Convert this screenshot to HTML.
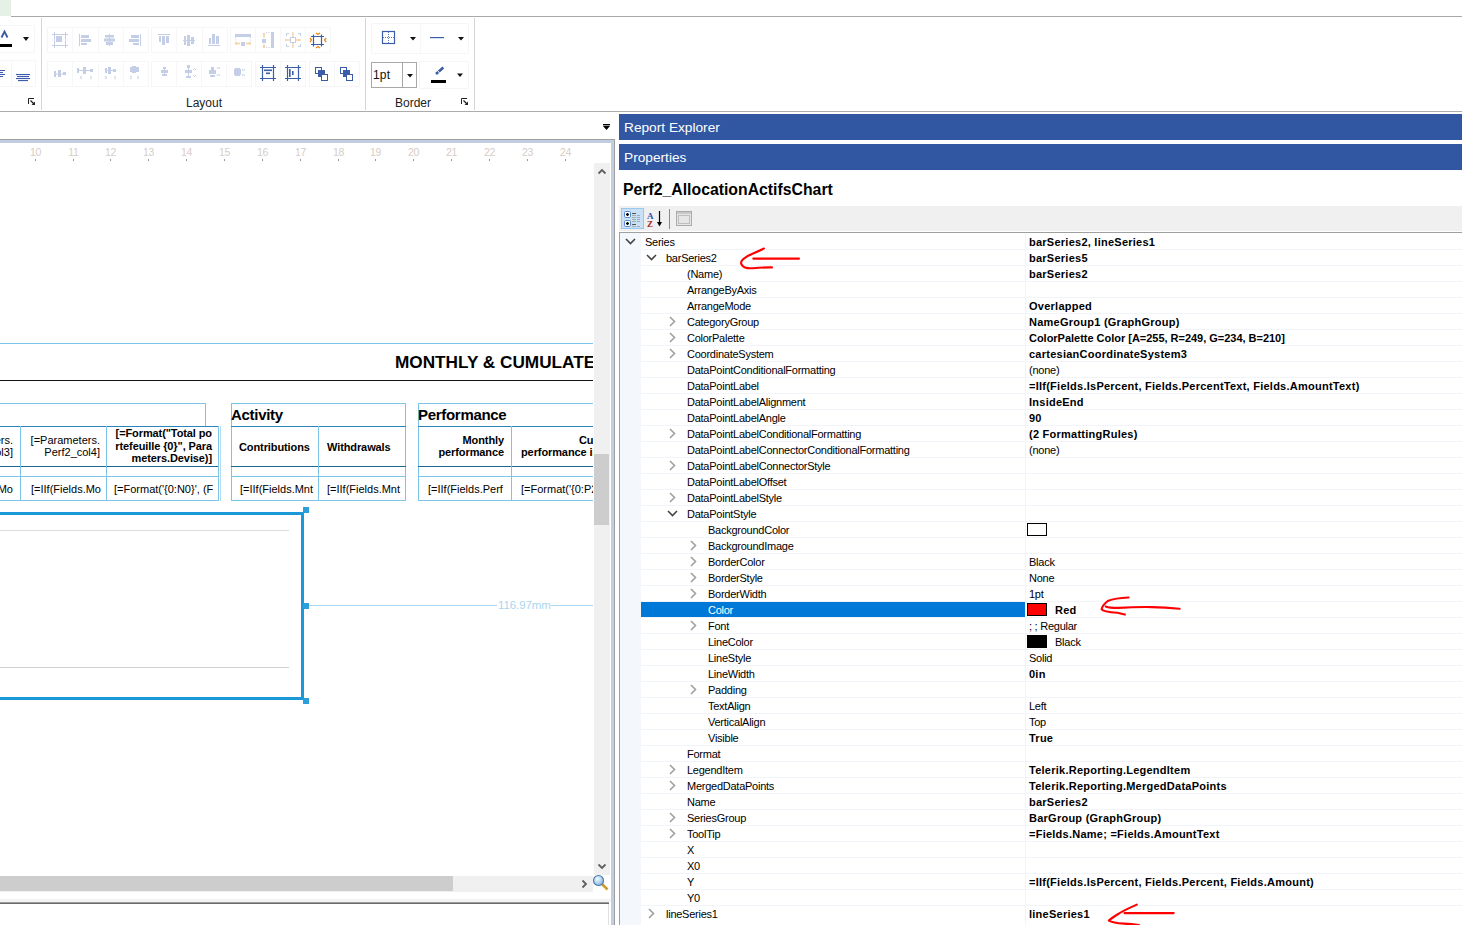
<!DOCTYPE html><html><head><meta charset="utf-8"><style>
*{margin:0;padding:0;box-sizing:border-box}
html,body{width:1462px;height:925px;overflow:hidden;background:#fff;font-family:"Liberation Sans",sans-serif;color:#000}
div,span,svg{position:absolute}
.t{white-space:nowrap;line-height:1}
</style></head><body><div style="left:0px;top:0px;width:11px;height:16px;background:#e6f1e6"></div>
<div style="left:11px;top:16px;width:1451px;height:1px;background:#a8a8a8"></div>
<div style="left:0px;top:111px;width:1462px;height:1px;background:#acacac"></div>
<div style="left:41px;top:18px;width:1px;height:92px;background:#d5d5d5"></div>
<div style="left:365px;top:18px;width:1px;height:92px;background:#d5d5d5"></div>
<div style="left:474px;top:18px;width:1px;height:92px;background:#d5d5d5"></div>
<svg style="left:0;top:0" width="480" height="112" viewBox="0 0 480 112"><rect x="-0.5" y="25.5" width="35" height="27" fill="none" stroke="#f6f6f6" stroke-width="1"/><rect x="-0.5" y="60.5" width="12" height="26" fill="none" stroke="#f6f6f6" stroke-width="1"/><rect x="11.5" y="60.5" width="24" height="26" fill="none" stroke="#f6f6f6" stroke-width="1"/><rect x="47.5" y="27.5" width="101" height="25" fill="none" stroke="#f6f6f6" stroke-width="1"/><rect x="72" y="28" width="1" height="24" fill="#f7f7f7"/><rect x="98" y="28" width="1" height="24" fill="#f7f7f7"/><rect x="123" y="28" width="1" height="24" fill="#f7f7f7"/><rect x="151.5" y="27.5" width="76" height="25" fill="none" stroke="#f6f6f6" stroke-width="1"/><rect x="176" y="28" width="1" height="24" fill="#f7f7f7"/><rect x="202" y="28" width="1" height="24" fill="#f7f7f7"/><rect x="230.5" y="27.5" width="100" height="25" fill="none" stroke="#f6f6f6" stroke-width="1"/><rect x="255" y="28" width="1" height="24" fill="#f7f7f7"/><rect x="280" y="28" width="1" height="24" fill="#f7f7f7"/><rect x="305" y="28" width="1" height="24" fill="#f7f7f7"/><rect x="47.5" y="61.5" width="101" height="25" fill="none" stroke="#f6f6f6" stroke-width="1"/><rect x="72" y="62" width="1" height="24" fill="#f7f7f7"/><rect x="98" y="62" width="1" height="24" fill="#f7f7f7"/><rect x="123" y="62" width="1" height="24" fill="#f7f7f7"/><rect x="151.5" y="61.5" width="100" height="25" fill="none" stroke="#f6f6f6" stroke-width="1"/><rect x="176" y="62" width="1" height="24" fill="#f7f7f7"/><rect x="201" y="62" width="1" height="24" fill="#f7f7f7"/><rect x="226" y="62" width="1" height="24" fill="#f7f7f7"/><rect x="255.5" y="61.5" width="50" height="25" fill="none" stroke="#f6f6f6" stroke-width="1"/><rect x="280" y="62" width="1" height="24" fill="#f7f7f7"/><rect x="309.5" y="61.5" width="50" height="25" fill="none" stroke="#f6f6f6" stroke-width="1"/><rect x="334" y="62" width="1" height="24" fill="#f7f7f7"/><rect x="371.5" y="23.5" width="97" height="30" fill="none" stroke="#f6f6f6" stroke-width="1"/><rect x="420" y="24" width="1" height="29" fill="#f7f7f7"/><rect x="419.5" y="61.5" width="49" height="27" fill="none" stroke="#f6f6f6" stroke-width="1"/><path d="M1.5 37.5 L4.5 31.5 L7.5 37.5" fill="none" stroke="#3b5ca8" stroke-width="1.9"/><rect x="0" y="44" width="12" height="3" fill="#000"/><path d="M23 37 L29 37 L26 41 Z" fill="#111"/><rect x="0" y="70" width="5" height="1" fill="#3b5ca8"/><rect x="0" y="72" width="3" height="1" fill="#3b5ca8"/><rect x="0" y="74" width="5" height="1" fill="#3b5ca8"/><rect x="0" y="76" width="3" height="1" fill="#3b5ca8"/><rect x="16" y="74" width="14" height="1.1" fill="#3b5ca8"/><rect x="17" y="76" width="12" height="1.1" fill="#3b5ca8"/><rect x="16" y="78" width="14" height="1.1" fill="#3b5ca8"/><rect x="18" y="80" width="10" height="1.1" fill="#3b5ca8"/><path d="M28.5 104 L28.5 98.5 L34 98.5" fill="none" stroke="#222" stroke-width="1"/><path d="M30.5 100.5 L34.5 104.5" stroke="#222" stroke-width="1.3"/><path d="M31.5 105 L35 105 L35 101.5 Z" fill="#222"/><path d="M461.5 104 L461.5 98.5 L467 98.5" fill="none" stroke="#222" stroke-width="1"/><path d="M463.5 100.5 L467.5 104.5" stroke="#222" stroke-width="1.3"/><path d="M464.5 105 L468 105 L468 101.5 Z" fill="#222"/><path d="M52 34.5 H68 M52 45.5 H68 M54.5 32 V48 M65.5 32 V48" stroke="#c4cee6" stroke-width="1"/><rect x="56" y="36" width="6" height="6" fill="#c4cee6"/><rect x="79" y="34" width="1" height="12" fill="#c4cee6"/><rect x="81" y="35" width="8" height="3" fill="#c4cee6"/><rect x="81" y="39" width="10" height="3" fill="#c4cee6"/><rect x="81" y="43" width="6" height="2" fill="#c4cee6"/><rect x="109" y="34" width="1" height="12" fill="#c4cee6"/><rect x="105" y="35" width="9" height="2.5" fill="#c4cee6"/><rect x="104" y="38.5" width="11" height="3" fill="#c4cee6"/><rect x="106" y="42" width="7" height="3" fill="#c4cee6"/><rect x="140" y="34" width="1" height="12" fill="#c4cee6"/><rect x="131" y="35" width="8" height="3" fill="#c4cee6"/><rect x="129" y="39" width="10" height="3" fill="#c4cee6"/><rect x="133" y="43" width="6" height="2" fill="#c4cee6"/><rect x="158" y="34" width="12" height="1" fill="#c4cee6"/><rect x="159" y="36" width="2" height="6" fill="#c4cee6"/><rect x="162" y="36" width="3" height="9" fill="#c4cee6"/><rect x="166" y="36" width="3" height="7" fill="#c4cee6"/><rect x="183" y="40" width="12" height="1" fill="#c4cee6"/><rect x="184" y="36" width="2" height="9" fill="#c4cee6"/><rect x="187" y="35" width="3" height="11" fill="#c4cee6"/><rect x="191" y="37" width="3" height="7" fill="#c4cee6"/><rect x="208" y="45" width="12" height="1" fill="#c4cee6"/><rect x="209" y="38" width="2" height="6" fill="#c4cee6"/><rect x="212" y="34" width="3" height="10" fill="#c4cee6"/><rect x="216" y="36" width="3" height="8" fill="#c4cee6"/><rect x="235" y="34" width="16" height="3" fill="#c4cee6"/><path d="M235.5 37 V43 M250.5 37 V43" stroke="#c4cee6" stroke-dasharray="1 1.5"/><rect x="241" y="42" width="4" height="4" fill="#c4cee6"/><path d="M235 43.5 H240 M246 43.5 H251" stroke="#f5d2a4" stroke-width="1.3"/><circle cx="236.5" cy="43.5" r="1.2" fill="#f5d2a4"/><circle cx="249.5" cy="43.5" r="1.2" fill="#f5d2a4"/><rect x="271" y="32" width="3" height="16" fill="#c4cee6"/><path d="M266 32.5 H270 M266 47.5 H270" stroke="#c4cee6" stroke-dasharray="1 1.5"/><rect x="262" y="39" width="4" height="4" fill="#c4cee6"/><path d="M264 33 V38 M264 44 V48" stroke="#f5d2a4" stroke-width="1.3"/><circle cx="264" cy="34" r="1.2" fill="#f5d2a4"/><circle cx="264" cy="46.5" r="1.2" fill="#f5d2a4"/><path d="M286.5 36 V33.5 H289 M298 33.5 H300.5 V36 M300.5 44 V46.5 H298 M289 46.5 H286.5 V44" fill="none" stroke="#c4cee6"/><rect x="290.5" y="37.5" width="5" height="5" fill="none" stroke="#c4cee6"/><path d="M293 32 V37 M293 43 V48 M285 40 H290 M296 40 H301" stroke="#f5d2a4" stroke-width="1.3"/><path d="M311 36.5 H324 M311 44.5 H324 M313.5 34.5 V46.5 M321.5 34.5 V46.5" stroke="#3b5ca8" stroke-width="1.2"/><path d="M316 33 L318 34.5 L320 33 M316 48 L318 46.5 L320 48 M310 38 L311.5 40 L310 42 M326 38 L324.5 40 L326 42" fill="none" stroke="#ee8a12" stroke-width="1.3"/><rect x="54" y="71" width="2" height="6" fill="#c4cee6"/><rect x="55" y="73.5" width="10" height="1" fill="#c4cee6"/><rect x="58" y="70" width="3" height="7" fill="#c4cee6"/><rect x="63" y="72" width="3" height="3" fill="#c4cee6"/><rect x="77" y="68" width="2" height="5" fill="#c4cee6"/><rect x="78" y="70" width="15" height="1" fill="#c4cee6"/><rect x="83" y="67" width="3" height="7" fill="#c4cee6"/><rect x="90" y="69" width="3" height="3" fill="#c4cee6"/><path d="M82 76 L80 77.5 L82 79 M90 76 L92 77.5 L90 79" fill="none" stroke="#c4cee6"/><rect x="105" y="68" width="2" height="5" fill="#c4cee6"/><rect x="106" y="70" width="10" height="1" fill="#c4cee6"/><rect x="108" y="67" width="3" height="7" fill="#c4cee6"/><rect x="113" y="69" width="3" height="3" fill="#c4cee6"/><path d="M105 76 L107 77.5 L105 79 M116 76 L114 77.5 L116 79" fill="none" stroke="#c4cee6"/><rect x="130" y="67" width="9" height="5" fill="#c4cee6"/><rect x="132" y="66" width="4" height="7" fill="#c4cee6"/><path d="M130 76 L132 77.5 L130 79 M139 76 L137 77.5 L139 79" fill="none" stroke="#c4cee6"/><rect x="163" y="67" width="3" height="2" fill="#c4cee6"/><rect x="161" y="70" width="7" height="3" fill="#c4cee6"/><rect x="162" y="74" width="5" height="2" fill="#c4cee6"/><rect x="164" y="68" width="1" height="7" fill="#c4cee6"/><rect x="187" y="65" width="3" height="3" fill="#c4cee6"/><rect x="185" y="70" width="7" height="3" fill="#c4cee6"/><rect x="186" y="76" width="5" height="2" fill="#c4cee6"/><rect x="188" y="67" width="1" height="10" fill="#c4cee6"/><path d="M193 70 L194.5 68.5 L196 70 M193 75 L194.5 76.5 L196 75" fill="none" stroke="#c4cee6"/><rect x="211" y="67" width="3" height="3" fill="#c4cee6"/><rect x="209" y="70" width="7" height="4" fill="#c4cee6"/><rect x="210" y="75" width="5" height="2" fill="#c4cee6"/><path d="M217 67 L218.5 69 L220 67 M217 76 L218.5 74 L220 76" fill="none" stroke="#c4cee6"/><rect x="234" y="69" width="7" height="6" fill="#c4cee6"/><rect x="235" y="68" width="5" height="8" fill="#c4cee6"/><path d="M242 69 L243.5 71 L245 69 M242 76 L243.5 74 L245 76" fill="none" stroke="#c4cee6"/><path d="M260 67.5 H276 M260 78.5 H276 M262.5 65 V81 M273.5 65 V81" stroke="#3b5ca8" stroke-width="1.2"/><rect x="264" y="69.5" width="8" height="1.6" fill="#3b5ca8"/><rect x="266" y="72.5" width="4" height="1.6" fill="#3b5ca8"/><path d="M285 67.5 H301 M285 78.5 H301 M287.5 65 V81 M298.5 65 V81" stroke="#3b5ca8" stroke-width="1.2"/><rect x="289" y="69" width="1.6" height="8" fill="#3b5ca8"/><rect x="292" y="71" width="1.6" height="4" fill="#3b5ca8"/><rect x="315.5" y="67.5" width="6" height="6" fill="#fff" stroke="#3b5ca8"/><rect x="318" y="70" width="7" height="7" fill="#3b5ca8"/><rect x="321.5" y="74.5" width="6" height="6" fill="#fff" stroke="#3b5ca8"/><rect x="340.5" y="67.5" width="6" height="6" fill="#fff" stroke="#3b5ca8"/><rect x="343" y="70" width="7" height="7" fill="#3b5ca8"/><rect x="346.5" y="74.5" width="6" height="6" fill="#fff" stroke="#3b5ca8"/><rect x="382.5" y="31.5" width="12" height="12" fill="none" stroke="#3b5ca8" stroke-width="1.2"/><path d="M388.5 32 V43 M383 37.5 H394" stroke="#3b5ca8" stroke-width="0.8" stroke-dasharray="1 1"/><path d="M410 37 L416 37 L413 40.5 Z" fill="#111"/><rect x="430" y="37" width="14" height="1.2" fill="#3b5ca8"/><path d="M458 37 L464 37 L461 40.5 Z" fill="#111"/><rect x="371.5" y="62.5" width="45" height="25" fill="#fff" stroke="#a8a8a8"/><rect x="402" y="63" width="1" height="24" fill="#a8a8a8"/><path d="M407 74 L413 74 L410 77.5 Z" fill="#111"/><path d="M436 74 L445 66" stroke="#3b5ca8" stroke-width="2.6" stroke-dasharray="3 0.8 6"/><rect x="431" y="80" width="15" height="3" fill="#000"/><path d="M457 73.5 L463 73.5 L460 77 Z" fill="#111"/></svg>
<span class="t" style="left:373px;top:69px;font-size:12px;color:#111;letter-spacing:0.2px">1pt</span>
<span class="t" style="left:186px;top:97px;font-size:12px;color:#222">Layout</span>
<span class="t" style="left:395px;top:97px;font-size:12px;color:#222">Border</span>
<div style="left:0px;top:139px;width:614px;height:1px;background:#a0a0a0"></div>
<div style="left:0px;top:140px;width:611px;height:3px;background:#c2cde2"></div>
<div style="left:611px;top:140px;width:3px;height:785px;background:#c2cde2"></div>
<div style="left:614px;top:139px;width:1px;height:786px;background:#a0a0a0"></div>
<div style="left:0;top:143px;width:611px;height:760px;overflow:hidden">
<span class="t" style="left:27.5px;top:4px;font-size:10.5px;color:#d6cdc6;width:16px;text-align:center;letter-spacing:-0.3px">10</span>
<div style="left:35px;top:16px;width:1px;height:2px;background:#9a9a9a"></div>
<span class="t" style="left:65.5px;top:4px;font-size:10.5px;color:#d6cdc6;width:16px;text-align:center;letter-spacing:-0.3px">11</span>
<div style="left:73px;top:16px;width:1px;height:2px;background:#9a9a9a"></div>
<span class="t" style="left:102.5px;top:4px;font-size:10.5px;color:#d6cdc6;width:16px;text-align:center;letter-spacing:-0.3px">12</span>
<div style="left:110px;top:16px;width:1px;height:2px;background:#9a9a9a"></div>
<span class="t" style="left:140.5px;top:4px;font-size:10.5px;color:#d6cdc6;width:16px;text-align:center;letter-spacing:-0.3px">13</span>
<div style="left:148px;top:16px;width:1px;height:2px;background:#9a9a9a"></div>
<span class="t" style="left:178.5px;top:4px;font-size:10.5px;color:#d6cdc6;width:16px;text-align:center;letter-spacing:-0.3px">14</span>
<div style="left:186px;top:16px;width:1px;height:2px;background:#9a9a9a"></div>
<span class="t" style="left:216.5px;top:4px;font-size:10.5px;color:#d6cdc6;width:16px;text-align:center;letter-spacing:-0.3px">15</span>
<div style="left:224px;top:16px;width:1px;height:2px;background:#9a9a9a"></div>
<span class="t" style="left:254.5px;top:4px;font-size:10.5px;color:#d6cdc6;width:16px;text-align:center;letter-spacing:-0.3px">16</span>
<div style="left:262px;top:16px;width:1px;height:2px;background:#9a9a9a"></div>
<span class="t" style="left:292.5px;top:4px;font-size:10.5px;color:#d6cdc6;width:16px;text-align:center;letter-spacing:-0.3px">17</span>
<div style="left:300px;top:16px;width:1px;height:2px;background:#9a9a9a"></div>
<span class="t" style="left:330.5px;top:4px;font-size:10.5px;color:#d6cdc6;width:16px;text-align:center;letter-spacing:-0.3px">18</span>
<div style="left:338px;top:16px;width:1px;height:2px;background:#9a9a9a"></div>
<span class="t" style="left:367.5px;top:4px;font-size:10.5px;color:#d6cdc6;width:16px;text-align:center;letter-spacing:-0.3px">19</span>
<div style="left:375px;top:16px;width:1px;height:2px;background:#9a9a9a"></div>
<span class="t" style="left:405.5px;top:4px;font-size:10.5px;color:#d6cdc6;width:16px;text-align:center;letter-spacing:-0.3px">20</span>
<div style="left:413px;top:16px;width:1px;height:2px;background:#9a9a9a"></div>
<span class="t" style="left:443.5px;top:4px;font-size:10.5px;color:#d6cdc6;width:16px;text-align:center;letter-spacing:-0.3px">21</span>
<div style="left:451px;top:16px;width:1px;height:2px;background:#9a9a9a"></div>
<span class="t" style="left:481.5px;top:4px;font-size:10.5px;color:#d6cdc6;width:16px;text-align:center;letter-spacing:-0.3px">22</span>
<div style="left:489px;top:16px;width:1px;height:2px;background:#9a9a9a"></div>
<span class="t" style="left:519.5px;top:4px;font-size:10.5px;color:#d6cdc6;width:16px;text-align:center;letter-spacing:-0.3px">23</span>
<div style="left:527px;top:16px;width:1px;height:2px;background:#9a9a9a"></div>
<span class="t" style="left:557.5px;top:4px;font-size:10.5px;color:#d6cdc6;width:16px;text-align:center;letter-spacing:-0.3px">24</span>
<div style="left:565px;top:16px;width:1px;height:2px;background:#9a9a9a"></div>
<div style="left:0;top:0;width:593px;height:733px;overflow:hidden">
<div style="left:0px;top:200px;width:594px;height:1px;background:#7cc4e8"></div>
<span class="t" style="left:395px;top:211px;font-size:17.2px;font-weight:bold">MONTHLY &amp; CUMULATED</span>
<div style="left:0px;top:237px;width:594px;height:1px;background:#111"></div>
<div style="left:0px;top:260px;width:206px;height:1px;background:#7cc4e8"></div>
<div style="left:205px;top:260px;width:1px;height:23px;background:#7cc4e8"></div>
<div style="left:0px;top:283px;width:219px;height:1px;background:#2a85bd"></div>
<div style="left:0px;top:323px;width:219px;height:1px;background:#1f6a95"></div>
<div style="left:0px;top:333px;width:219px;height:1px;background:#7cc4e8"></div>
<div style="left:0px;top:357px;width:219px;height:1px;background:#7cc4e8"></div>
<div style="left:20px;top:283px;width:1px;height:75px;background:#7cc4e8"></div>
<div style="left:106px;top:283px;width:1px;height:75px;background:#7cc4e8"></div>
<div style="left:218px;top:283px;width:1px;height:75px;background:#7cc4e8"></div>
<div style="left:220px;top:283px;width:1px;height:75px;background:#b4dcf2"></div>
<div style="left:231px;top:260px;width:175px;height:1px;background:#7cc4e8"></div>
<div style="left:231px;top:260px;width:1px;height:98px;background:#7cc4e8"></div>
<div style="left:405px;top:260px;width:1px;height:98px;background:#7cc4e8"></div>
<div style="left:231px;top:283px;width:175px;height:1px;background:#2a85bd"></div>
<div style="left:231px;top:323px;width:175px;height:1px;background:#1f6a95"></div>
<div style="left:231px;top:333px;width:175px;height:1px;background:#7cc4e8"></div>
<div style="left:231px;top:357px;width:175px;height:1px;background:#7cc4e8"></div>
<div style="left:318px;top:283px;width:1px;height:75px;background:#7cc4e8"></div>
<span class="t" style="left:231px;top:264px;font-size:15px;font-weight:bold;letter-spacing:-0.3px">Activity</span>
<div style="left:418px;top:260px;width:180px;height:1px;background:#7cc4e8"></div>
<div style="left:418px;top:260px;width:1px;height:98px;background:#7cc4e8"></div>
<div style="left:418px;top:283px;width:180px;height:1px;background:#2a85bd"></div>
<div style="left:418px;top:323px;width:180px;height:1px;background:#1f6a95"></div>
<div style="left:418px;top:333px;width:180px;height:1px;background:#7cc4e8"></div>
<div style="left:418px;top:357px;width:180px;height:1px;background:#7cc4e8"></div>
<div style="left:511px;top:283px;width:1px;height:75px;background:#7cc4e8"></div>
<span class="t" style="left:418px;top:264px;font-size:15px;font-weight:bold;letter-spacing:-0.3px">Performance</span>
<span class="t" style="left:239px;top:299px;font-size:11px;font-weight:bold;letter-spacing:-0.1px">Contributions</span>
<span class="t" style="left:327px;top:299px;font-size:11px;font-weight:bold;letter-spacing:-0.1px">Withdrawals</span>
<span class="t" style="left:420px;top:291px;width:84px;text-align:right;line-height:12px;font-size:11px;font-weight:bold;letter-spacing:-0.1px">Monthly<br>performance</span>
<span class="t" style="left:579px;top:292px;font-size:11px;font-weight:bold;letter-spacing:-0.1px">Cumulated</span>
<span class="t" style="left:521px;top:304px;font-size:11px;font-weight:bold;letter-spacing:-0.1px">performance in %</span>
<span class="t" style="left:240px;top:341px;font-size:11px;letter-spacing:0px">[=IIf(Fields.Mnt</span>
<span class="t" style="left:327px;top:341px;font-size:11px;letter-spacing:0px">[=IIf(Fields.Mnt</span>
<span class="t" style="left:428px;top:341px;font-size:11px;letter-spacing:0px">[=IIf(Fields.Perf</span>
<span class="t" style="left:521px;top:341px;font-size:11px;letter-spacing:0px">[=Format('{0:P2}', (F</span>
<div style="left:0;top:284px;width:20px;height:73px;overflow:hidden"><span class="t" style="left:-87px;top:7px;width:100px;text-align:right;line-height:12px;font-size:11px;letter-spacing:0px">[=Parameters.<br>Perf2_col3]</span><span class="t" style="left:-87px;top:57px;width:100px;text-align:right;font-size:11px;letter-spacing:0px">[=IIf(Fields.Mo</span></div>
<span class="t" style="left:20px;top:291px;width:80px;text-align:right;line-height:12px;font-size:11px;letter-spacing:0px">[=Parameters.<br>Perf2_col4]</span>
<span class="t" style="left:100px;top:284px;width:112px;text-align:right;line-height:12.5px;font-size:11px;font-weight:bold;letter-spacing:-0.1px">[=Format("Total po<br>rtefeuille {0}", Para<br>meters.Devise)]</span>
<span class="t" style="left:31px;top:341px;font-size:11px;letter-spacing:0px">[=IIf(Fields.Mo</span>
<span class="t" style="left:114px;top:341px;font-size:11px;letter-spacing:0px">[=Format('{0:N0}', (F</span>
<div style="left:0px;top:369px;width:304px;height:3px;background:#1b98d8"></div>
<div style="left:0px;top:554px;width:304px;height:3px;background:#1b98d8"></div>
<div style="left:301px;top:369px;width:3px;height:188px;background:#1b98d8"></div>
<div style="left:303px;top:364px;width:6px;height:6px;background:#2a9fdb"></div>
<div style="left:303px;top:460px;width:6px;height:6px;background:#2a9fdb"></div>
<div style="left:303px;top:555px;width:6px;height:6px;background:#2a9fdb"></div>
<div style="left:0px;top:387px;width:289px;height:1px;background:#dcdcdc"></div>
<div style="left:0px;top:524px;width:289px;height:1px;background:#d0d0d0"></div>
<div style="left:309px;top:462px;width:188px;height:1px;background:#a9d5f0"></div>
<div style="left:551px;top:462px;width:42px;height:1px;background:#a9d5f0"></div>
<span class="t" style="left:498px;top:457px;font-size:11.5px;color:#a9d5f0;letter-spacing:-0.1px">116.97mm</span>
</div>
<div style="left:594px;top:20px;width:16px;height:712px;background:#f0f0f0"></div>
<div style="left:594px;top:311px;width:15px;height:71px;background:#cdcdcd"></div>
<svg style="left:597px;top:24px" width="10" height="8" viewBox="0 0 10 8"><path d="M1.5 6.5 L5 3 L8.5 6.5" fill="none" stroke="#606060" stroke-width="1.8"/></svg>
<svg style="left:597px;top:720px" width="10" height="8" viewBox="0 0 10 8"><path d="M1.5 1.5 L5 5 L8.5 1.5" fill="none" stroke="#606060" stroke-width="1.8"/></svg>
<div style="left:0px;top:733px;width:593px;height:16px;background:#f0f0f0"></div>
<div style="left:0px;top:733px;width:453px;height:15px;background:#cdcdcd"></div>
<svg style="left:581px;top:736px" width="8" height="10" viewBox="0 0 8 10"><path d="M1.5 1.5 L5 5 L1.5 8.5" fill="none" stroke="#606060" stroke-width="1.8"/></svg>
<svg style="left:592px;top:731px" width="18" height="18" viewBox="0 0 18 18"><defs><radialGradient id="mg" cx="0.4" cy="0.35" r="0.7"><stop offset="0" stop-color="#f4fbff"/><stop offset="1" stop-color="#7fb2dc"/></radialGradient></defs><line x1="9.5" y1="9.5" x2="15.5" y2="15.5" stroke="#c9a030" stroke-width="2.6"/><circle cx="6.5" cy="6.5" r="5" fill="url(#mg)" stroke="#4a78a8" stroke-width="1.1"/></svg>
<div style="left:0px;top:756px;width:611px;height:3px;background:#f3f3f3"></div>
</div>
<div style="left:0px;top:902px;width:609px;height:1px;background:#9a9a9a"></div>
<div style="left:0px;top:903px;width:609px;height:1px;background:#6a6a6a"></div>
<div style="left:608px;top:904px;width:1px;height:21px;background:#e0e0e0"></div>
<svg style="left:602px;top:123px" width="9" height="8" viewBox="0 0 9 8"><rect x="1" y="1" width="7" height="1.4" fill="#000"/><path d="M1 3 L8 3 L4.5 7 Z" fill="#000"/></svg>
<div style="left:619px;top:114px;width:843px;height:26px;background:#3157a3"></div>
<div style="left:619px;top:144px;width:843px;height:26px;background:#3157a3"></div>
<span class="t" style="left:624px;top:121px;font-size:13.7px;color:#fff">Report Explorer</span>
<span class="t" style="left:624px;top:151px;font-size:13.7px;color:#fff">Properties</span>
<span class="t" style="left:623px;top:182px;font-size:15.8px;font-weight:bold">Perf2_AllocationActifsChart</span>
<div style="left:619px;top:206px;width:843px;height:25px;background:#f0f0f0"></div>
<div style="left:619px;top:232px;width:843px;height:1px;background:#a0a0a0"></div>
<div style="left:619px;top:232px;width:1px;height:693px;background:#a0a0a0"></div>
<div style="left:620px;top:233px;width:21px;height:692px;background:#f4f7fb"></div>
<div style="left:621px;top:208px;width:23px;height:21px;background:#c9e0f5;border:1px solid #98c8ee"></div>
<svg style="left:619px;top:206px" width="80" height="25" viewBox="0 0 80 25"><rect x="5.5" y="5.5" width="6" height="6" rx="1.2" fill="#fff" stroke="#5a8ad0"/><path d="M7 8.5 H10 M8.5 7 V10" stroke="#000" stroke-width="1.3"/><rect x="5.5" y="14.5" width="6" height="6" rx="1.2" fill="#fff" stroke="#5a8ad0"/><path d="M7 17.5 H10 M8.5 16 V19" stroke="#000" stroke-width="1.3"/><rect x="13" y="7" width="4" height="1" fill="#555"/><rect x="13" y="18" width="4" height="1" fill="#555"/><rect x="13" y="9" width="4" height="1" fill="#9fb0a8"/><rect x="18" y="9" width="3" height="1" fill="#a0a8c0"/><rect x="13" y="11" width="4" height="1" fill="#9fb0a8"/><rect x="18" y="11" width="3" height="1" fill="#a0a8c0"/><rect x="13" y="13" width="4" height="1" fill="#9fb0a8"/><rect x="18" y="13" width="3" height="1" fill="#a0a8c0"/><rect x="13" y="15" width="4" height="1" fill="#9fb0a8"/><rect x="18" y="15" width="3" height="1" fill="#a0a8c0"/><rect x="13" y="20" width="4" height="1" fill="#9fb0a8"/><rect x="18" y="20" width="3" height="1" fill="#a0a8c0"/><text x="28" y="12.5" font-family="Liberation Serif" font-weight="bold" font-size="9" fill="#2a4fb0">A</text><text x="28" y="20.5" font-family="Liberation Serif" font-weight="bold" font-size="9" fill="#a02828">Z</text><path d="M40.5 5 V19" stroke="#000" stroke-width="1.2"/><path d="M38 16 L40.5 20.5 L43 16 Z" fill="#000"/><rect x="50" y="3" width="1" height="20" fill="#8a8a8a"/><rect x="57.5" y="5.5" width="15" height="14" fill="#e6e6e6" stroke="#aaa"/><rect x="58" y="6" width="14" height="2" fill="#c8c8c8"/><rect x="59.5" y="9.5" width="11" height="8" fill="none" stroke="#bdbdbd"/></svg>
<div style="left:1025px;top:233px;width:1px;height:692px;background:#f1f4f9"></div>
<span class="t" style="left:645px;top:237px;font-size:11px;letter-spacing:-0.25px;color:#000">Series</span>
<svg style="left:625px;top:238px" width="11" height="7" viewBox="0 0 11 7"><path d="M1 1 L5.5 5.5 L10 1" fill="none" stroke="#444" stroke-width="1.6"/></svg>
<span class="t" style="left:1029px;top:237px;font-size:11px;font-weight:bold;letter-spacing:0.25px">barSeries2, lineSeries1</span>
<div style="left:641px;top:249px;width:821px;height:1px;background:#f1f4f9"></div>
<span class="t" style="left:666px;top:253px;font-size:11px;letter-spacing:-0.25px;color:#000">barSeries2</span>
<svg style="left:646px;top:254px" width="11" height="7" viewBox="0 0 11 7"><path d="M1 1 L5.5 5.5 L10 1" fill="none" stroke="#444" stroke-width="1.6"/></svg>
<span class="t" style="left:1029px;top:253px;font-size:11px;font-weight:bold;letter-spacing:0.25px">barSeries5</span>
<div style="left:641px;top:265px;width:821px;height:1px;background:#f1f4f9"></div>
<span class="t" style="left:687px;top:269px;font-size:11px;letter-spacing:-0.25px;color:#000">(Name)</span>
<span class="t" style="left:1029px;top:269px;font-size:11px;font-weight:bold;letter-spacing:0.25px">barSeries2</span>
<div style="left:641px;top:281px;width:821px;height:1px;background:#f1f4f9"></div>
<span class="t" style="left:687px;top:285px;font-size:11px;letter-spacing:-0.25px;color:#000">ArrangeByAxis</span>
<div style="left:641px;top:297px;width:821px;height:1px;background:#f1f4f9"></div>
<span class="t" style="left:687px;top:301px;font-size:11px;letter-spacing:-0.25px;color:#000">ArrangeMode</span>
<span class="t" style="left:1029px;top:301px;font-size:11px;font-weight:bold;letter-spacing:0.25px">Overlapped</span>
<div style="left:641px;top:313px;width:821px;height:1px;background:#f1f4f9"></div>
<span class="t" style="left:687px;top:317px;font-size:11px;letter-spacing:-0.25px;color:#000">CategoryGroup</span>
<svg style="left:669px;top:316px" width="7" height="11" viewBox="0 0 7 11"><path d="M1 1 L5.5 5.5 L1 10" fill="none" stroke="#a0a0a0" stroke-width="1.6"/></svg>
<span class="t" style="left:1029px;top:317px;font-size:11px;font-weight:bold;letter-spacing:0.25px">NameGroup1 (GraphGroup)</span>
<div style="left:641px;top:329px;width:821px;height:1px;background:#f1f4f9"></div>
<span class="t" style="left:687px;top:333px;font-size:11px;letter-spacing:-0.25px;color:#000">ColorPalette</span>
<svg style="left:669px;top:332px" width="7" height="11" viewBox="0 0 7 11"><path d="M1 1 L5.5 5.5 L1 10" fill="none" stroke="#a0a0a0" stroke-width="1.6"/></svg>
<span class="t" style="left:1029px;top:333px;font-size:11px;font-weight:bold;letter-spacing:-0.02px">ColorPalette Color [A=255, R=249, G=234, B=210]</span>
<div style="left:641px;top:345px;width:821px;height:1px;background:#f1f4f9"></div>
<span class="t" style="left:687px;top:349px;font-size:11px;letter-spacing:-0.25px;color:#000">CoordinateSystem</span>
<svg style="left:669px;top:348px" width="7" height="11" viewBox="0 0 7 11"><path d="M1 1 L5.5 5.5 L1 10" fill="none" stroke="#a0a0a0" stroke-width="1.6"/></svg>
<span class="t" style="left:1029px;top:349px;font-size:11px;font-weight:bold;letter-spacing:0.25px">cartesianCoordinateSystem3</span>
<div style="left:641px;top:361px;width:821px;height:1px;background:#f1f4f9"></div>
<span class="t" style="left:687px;top:365px;font-size:11px;letter-spacing:-0.25px;color:#000">DataPointConditionalFormatting</span>
<span class="t" style="left:1029px;top:365px;font-size:11px;letter-spacing:-0.25px">(none)</span>
<div style="left:641px;top:377px;width:821px;height:1px;background:#f1f4f9"></div>
<span class="t" style="left:687px;top:381px;font-size:11px;letter-spacing:-0.25px;color:#000">DataPointLabel</span>
<span class="t" style="left:1029px;top:381px;font-size:11px;font-weight:bold;letter-spacing:0.25px">=IIf(Fields.IsPercent, Fields.PercentText, Fields.AmountText)</span>
<div style="left:641px;top:393px;width:821px;height:1px;background:#f1f4f9"></div>
<span class="t" style="left:687px;top:397px;font-size:11px;letter-spacing:-0.25px;color:#000">DataPointLabelAlignment</span>
<span class="t" style="left:1029px;top:397px;font-size:11px;font-weight:bold;letter-spacing:0.25px">InsideEnd</span>
<div style="left:641px;top:409px;width:821px;height:1px;background:#f1f4f9"></div>
<span class="t" style="left:687px;top:413px;font-size:11px;letter-spacing:-0.25px;color:#000">DataPointLabelAngle</span>
<span class="t" style="left:1029px;top:413px;font-size:11px;font-weight:bold;letter-spacing:0.25px">90</span>
<div style="left:641px;top:425px;width:821px;height:1px;background:#f1f4f9"></div>
<span class="t" style="left:687px;top:429px;font-size:11px;letter-spacing:-0.25px;color:#000">DataPointLabelConditionalFormatting</span>
<svg style="left:669px;top:428px" width="7" height="11" viewBox="0 0 7 11"><path d="M1 1 L5.5 5.5 L1 10" fill="none" stroke="#a0a0a0" stroke-width="1.6"/></svg>
<span class="t" style="left:1029px;top:429px;font-size:11px;font-weight:bold;letter-spacing:0.25px">(2 FormattingRules)</span>
<div style="left:641px;top:441px;width:821px;height:1px;background:#f1f4f9"></div>
<span class="t" style="left:687px;top:445px;font-size:11px;letter-spacing:-0.25px;color:#000">DataPointLabelConnectorConditionalFormatting</span>
<span class="t" style="left:1029px;top:445px;font-size:11px;letter-spacing:-0.25px">(none)</span>
<div style="left:641px;top:457px;width:821px;height:1px;background:#f1f4f9"></div>
<span class="t" style="left:687px;top:461px;font-size:11px;letter-spacing:-0.25px;color:#000">DataPointLabelConnectorStyle</span>
<svg style="left:669px;top:460px" width="7" height="11" viewBox="0 0 7 11"><path d="M1 1 L5.5 5.5 L1 10" fill="none" stroke="#a0a0a0" stroke-width="1.6"/></svg>
<div style="left:641px;top:473px;width:821px;height:1px;background:#f1f4f9"></div>
<span class="t" style="left:687px;top:477px;font-size:11px;letter-spacing:-0.25px;color:#000">DataPointLabelOffset</span>
<div style="left:641px;top:489px;width:821px;height:1px;background:#f1f4f9"></div>
<span class="t" style="left:687px;top:493px;font-size:11px;letter-spacing:-0.25px;color:#000">DataPointLabelStyle</span>
<svg style="left:669px;top:492px" width="7" height="11" viewBox="0 0 7 11"><path d="M1 1 L5.5 5.5 L1 10" fill="none" stroke="#a0a0a0" stroke-width="1.6"/></svg>
<div style="left:641px;top:505px;width:821px;height:1px;background:#f1f4f9"></div>
<span class="t" style="left:687px;top:509px;font-size:11px;letter-spacing:-0.25px;color:#000">DataPointStyle</span>
<svg style="left:667px;top:510px" width="11" height="7" viewBox="0 0 11 7"><path d="M1 1 L5.5 5.5 L10 1" fill="none" stroke="#444" stroke-width="1.6"/></svg>
<div style="left:641px;top:521px;width:821px;height:1px;background:#f1f4f9"></div>
<span class="t" style="left:708px;top:525px;font-size:11px;letter-spacing:-0.25px;color:#000">BackgroundColor</span>
<div style="left:1027px;top:523px;width:20px;height:13px;background:#fff;border:1px solid #000"></div>
<div style="left:641px;top:537px;width:821px;height:1px;background:#f1f4f9"></div>
<span class="t" style="left:708px;top:541px;font-size:11px;letter-spacing:-0.25px;color:#000">BackgroundImage</span>
<svg style="left:690px;top:540px" width="7" height="11" viewBox="0 0 7 11"><path d="M1 1 L5.5 5.5 L1 10" fill="none" stroke="#a0a0a0" stroke-width="1.6"/></svg>
<div style="left:641px;top:553px;width:821px;height:1px;background:#f1f4f9"></div>
<span class="t" style="left:708px;top:557px;font-size:11px;letter-spacing:-0.25px;color:#000">BorderColor</span>
<svg style="left:690px;top:556px" width="7" height="11" viewBox="0 0 7 11"><path d="M1 1 L5.5 5.5 L1 10" fill="none" stroke="#a0a0a0" stroke-width="1.6"/></svg>
<span class="t" style="left:1029px;top:557px;font-size:11px;letter-spacing:-0.25px">Black</span>
<div style="left:641px;top:569px;width:821px;height:1px;background:#f1f4f9"></div>
<span class="t" style="left:708px;top:573px;font-size:11px;letter-spacing:-0.25px;color:#000">BorderStyle</span>
<svg style="left:690px;top:572px" width="7" height="11" viewBox="0 0 7 11"><path d="M1 1 L5.5 5.5 L1 10" fill="none" stroke="#a0a0a0" stroke-width="1.6"/></svg>
<span class="t" style="left:1029px;top:573px;font-size:11px;letter-spacing:-0.25px">None</span>
<div style="left:641px;top:585px;width:821px;height:1px;background:#f1f4f9"></div>
<span class="t" style="left:708px;top:589px;font-size:11px;letter-spacing:-0.25px;color:#000">BorderWidth</span>
<svg style="left:690px;top:588px" width="7" height="11" viewBox="0 0 7 11"><path d="M1 1 L5.5 5.5 L1 10" fill="none" stroke="#a0a0a0" stroke-width="1.6"/></svg>
<span class="t" style="left:1029px;top:589px;font-size:11px;letter-spacing:-0.25px">1pt</span>
<div style="left:641px;top:601px;width:821px;height:1px;background:#f1f4f9"></div>
<div style="left:641px;top:602px;width:384px;height:15px;background:#0078d7"></div>
<span class="t" style="left:708px;top:605px;font-size:11px;letter-spacing:-0.25px;color:#fff">Color</span>
<div style="left:1027px;top:603px;width:20px;height:13px;background:#ff0000;border:1px solid #000"></div>
<span class="t" style="left:1055px;top:605px;font-size:11px;font-weight:bold;letter-spacing:0.25px">Red</span>
<div style="left:641px;top:617px;width:821px;height:1px;background:#f1f4f9"></div>
<span class="t" style="left:708px;top:621px;font-size:11px;letter-spacing:-0.25px;color:#000">Font</span>
<svg style="left:690px;top:620px" width="7" height="11" viewBox="0 0 7 11"><path d="M1 1 L5.5 5.5 L1 10" fill="none" stroke="#a0a0a0" stroke-width="1.6"/></svg>
<span class="t" style="left:1029px;top:621px;font-size:11px;letter-spacing:-0.25px">; ; Regular</span>
<div style="left:641px;top:633px;width:821px;height:1px;background:#f1f4f9"></div>
<span class="t" style="left:708px;top:637px;font-size:11px;letter-spacing:-0.25px;color:#000">LineColor</span>
<div style="left:1027px;top:635px;width:20px;height:13px;background:#000;border:1px solid #000"></div>
<span class="t" style="left:1055px;top:637px;font-size:11px;letter-spacing:-0.25px">Black</span>
<div style="left:641px;top:649px;width:821px;height:1px;background:#f1f4f9"></div>
<span class="t" style="left:708px;top:653px;font-size:11px;letter-spacing:-0.25px;color:#000">LineStyle</span>
<span class="t" style="left:1029px;top:653px;font-size:11px;letter-spacing:-0.25px">Solid</span>
<div style="left:641px;top:665px;width:821px;height:1px;background:#f1f4f9"></div>
<span class="t" style="left:708px;top:669px;font-size:11px;letter-spacing:-0.25px;color:#000">LineWidth</span>
<span class="t" style="left:1029px;top:669px;font-size:11px;font-weight:bold;letter-spacing:0.25px">0in</span>
<div style="left:641px;top:681px;width:821px;height:1px;background:#f1f4f9"></div>
<span class="t" style="left:708px;top:685px;font-size:11px;letter-spacing:-0.25px;color:#000">Padding</span>
<svg style="left:690px;top:684px" width="7" height="11" viewBox="0 0 7 11"><path d="M1 1 L5.5 5.5 L1 10" fill="none" stroke="#a0a0a0" stroke-width="1.6"/></svg>
<div style="left:641px;top:697px;width:821px;height:1px;background:#f1f4f9"></div>
<span class="t" style="left:708px;top:701px;font-size:11px;letter-spacing:-0.25px;color:#000">TextAlign</span>
<span class="t" style="left:1029px;top:701px;font-size:11px;letter-spacing:-0.25px">Left</span>
<div style="left:641px;top:713px;width:821px;height:1px;background:#f1f4f9"></div>
<span class="t" style="left:708px;top:717px;font-size:11px;letter-spacing:-0.25px;color:#000">VerticalAlign</span>
<span class="t" style="left:1029px;top:717px;font-size:11px;letter-spacing:-0.25px">Top</span>
<div style="left:641px;top:729px;width:821px;height:1px;background:#f1f4f9"></div>
<span class="t" style="left:708px;top:733px;font-size:11px;letter-spacing:-0.25px;color:#000">Visible</span>
<span class="t" style="left:1029px;top:733px;font-size:11px;font-weight:bold;letter-spacing:0.25px">True</span>
<div style="left:641px;top:745px;width:821px;height:1px;background:#f1f4f9"></div>
<span class="t" style="left:687px;top:749px;font-size:11px;letter-spacing:-0.25px;color:#000">Format</span>
<div style="left:641px;top:761px;width:821px;height:1px;background:#f1f4f9"></div>
<span class="t" style="left:687px;top:765px;font-size:11px;letter-spacing:-0.25px;color:#000">LegendItem</span>
<svg style="left:669px;top:764px" width="7" height="11" viewBox="0 0 7 11"><path d="M1 1 L5.5 5.5 L1 10" fill="none" stroke="#a0a0a0" stroke-width="1.6"/></svg>
<span class="t" style="left:1029px;top:765px;font-size:11px;font-weight:bold;letter-spacing:0.25px">Telerik.Reporting.LegendItem</span>
<div style="left:641px;top:777px;width:821px;height:1px;background:#f1f4f9"></div>
<span class="t" style="left:687px;top:781px;font-size:11px;letter-spacing:-0.25px;color:#000">MergedDataPoints</span>
<svg style="left:669px;top:780px" width="7" height="11" viewBox="0 0 7 11"><path d="M1 1 L5.5 5.5 L1 10" fill="none" stroke="#a0a0a0" stroke-width="1.6"/></svg>
<span class="t" style="left:1029px;top:781px;font-size:11px;font-weight:bold;letter-spacing:0.25px">Telerik.Reporting.MergedDataPoints</span>
<div style="left:641px;top:793px;width:821px;height:1px;background:#f1f4f9"></div>
<span class="t" style="left:687px;top:797px;font-size:11px;letter-spacing:-0.25px;color:#000">Name</span>
<span class="t" style="left:1029px;top:797px;font-size:11px;font-weight:bold;letter-spacing:0.25px">barSeries2</span>
<div style="left:641px;top:809px;width:821px;height:1px;background:#f1f4f9"></div>
<span class="t" style="left:687px;top:813px;font-size:11px;letter-spacing:-0.25px;color:#000">SeriesGroup</span>
<svg style="left:669px;top:812px" width="7" height="11" viewBox="0 0 7 11"><path d="M1 1 L5.5 5.5 L1 10" fill="none" stroke="#a0a0a0" stroke-width="1.6"/></svg>
<span class="t" style="left:1029px;top:813px;font-size:11px;font-weight:bold;letter-spacing:0.25px">BarGroup (GraphGroup)</span>
<div style="left:641px;top:825px;width:821px;height:1px;background:#f1f4f9"></div>
<span class="t" style="left:687px;top:829px;font-size:11px;letter-spacing:-0.25px;color:#000">ToolTip</span>
<svg style="left:669px;top:828px" width="7" height="11" viewBox="0 0 7 11"><path d="M1 1 L5.5 5.5 L1 10" fill="none" stroke="#a0a0a0" stroke-width="1.6"/></svg>
<span class="t" style="left:1029px;top:829px;font-size:11px;font-weight:bold;letter-spacing:0.25px">=Fields.Name; =Fields.AmountText</span>
<div style="left:641px;top:841px;width:821px;height:1px;background:#f1f4f9"></div>
<span class="t" style="left:687px;top:845px;font-size:11px;letter-spacing:-0.25px;color:#000">X</span>
<div style="left:641px;top:857px;width:821px;height:1px;background:#f1f4f9"></div>
<span class="t" style="left:687px;top:861px;font-size:11px;letter-spacing:-0.25px;color:#000">X0</span>
<div style="left:641px;top:873px;width:821px;height:1px;background:#f1f4f9"></div>
<span class="t" style="left:687px;top:877px;font-size:11px;letter-spacing:-0.25px;color:#000">Y</span>
<span class="t" style="left:1029px;top:877px;font-size:11px;font-weight:bold;letter-spacing:0.25px">=IIf(Fields.IsPercent, Fields.Percent, Fields.Amount)</span>
<div style="left:641px;top:889px;width:821px;height:1px;background:#f1f4f9"></div>
<span class="t" style="left:687px;top:893px;font-size:11px;letter-spacing:-0.25px;color:#000">Y0</span>
<div style="left:641px;top:905px;width:821px;height:1px;background:#f1f4f9"></div>
<span class="t" style="left:666px;top:909px;font-size:11px;letter-spacing:-0.25px;color:#000">lineSeries1</span>
<svg style="left:648px;top:908px" width="7" height="11" viewBox="0 0 7 11"><path d="M1 1 L5.5 5.5 L1 10" fill="none" stroke="#a0a0a0" stroke-width="1.6"/></svg>
<span class="t" style="left:1029px;top:909px;font-size:11px;font-weight:bold;letter-spacing:0.25px">lineSeries1</span>
<svg style="left:0;top:0" width="1462" height="925" viewBox="0 0 1462 925"><g fill="none" stroke="#ff0000" stroke-width="2.1" stroke-linecap="round" stroke-linejoin="round"><path d="M763.9 248.5 C756 252.5 750 254.5 746.4 256.8 C742 259.5 740.5 262.5 741.4 264.2 C743 267.5 748 268.6 753 268.2 C760 267.6 766 267.3 772 267.4"/><path d="M753.3 258.6 L799 258.6"/><path d="M1128.6 597.5 C1120 597.8 1112 599.2 1107.8 601 C1104 604 1102 607 1101.6 609.2 C1103 611.5 1110 612.3 1117.4 612.8 C1120 613.3 1123 614 1124.9 614.6"/><path d="M1105.7 606.4 C1109 607.6 1113 608 1118.7 607.9 C1130 607.2 1142 607 1151.6 607.1 C1163 607.4 1172 608.1 1179.6 608.8"/><path d="M1136.8 904.6 C1128 908.5 1122 911.5 1119 913.5 C1115 916 1111 918.5 1108.8 920.6 C1112 922.5 1118 923.2 1124 923.6 C1130 924 1134 924.4 1139 925"/><path d="M1124.5 913.1 L1173.7 913.1"/></g></svg></body></html>
